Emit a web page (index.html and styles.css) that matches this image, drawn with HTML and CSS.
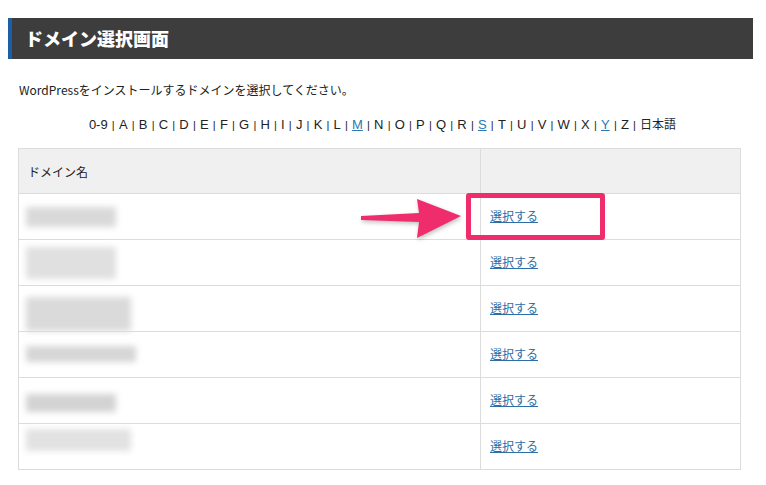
FILE: index.html
```html
<!DOCTYPE html>
<html lang="ja">
<head>
    <meta charset="UTF-8">
    <meta name="viewport" content="width=device-width, initial-scale=1.0">
    <title>ドメイン選択画面</title>
    <link rel="stylesheet" href="styles.css">
</head>
<body>
    <div class="page">
        <h1 class="pageTitle">ドメイン選択画面</h1>
        <div class="content">
            <p class="lead">WordPressをインストールするドメインを選択してください。</p>
            <p class="alphabet">
                <span>0-9</span><i>|</i><span>A</span><i>|</i><span>B</span><i>|</i><span>C</span><i>|</i><span>D</span><i>|</i><span>E</span><i>|</i><span>F</span><i>|</i><span>G</span><i>|</i><span>H</span><i>|</i><span>I</span><i>|</i><span>J</span><i>|</i><span>K</span><i>|</i><span>L</span><i>|</i><a href="#">M</a><i>|</i><span>N</span><i>|</i><span>O</span><i>|</i><span>P</span><i>|</i><span>Q</span><i>|</i><span>R</span><i>|</i><a href="#">S</a><i>|</i><span>T</span><i>|</i><span>U</span><i>|</i><span>V</span><i>|</i><span>W</span><i>|</i><span>X</span><i>|</i><a href="#">Y</a><i>|</i><span>Z</span><i>|</i><span>日本語</span>
            </p>
            <table class="domainTable">
                <tr>
                    <th class="nameCol">ドメイン名</th>
                    <th></th>
                </tr>
                <tr>
                    <td><div class="blur"><span class="b1"></span></div></td>
                    <td class="selectCell">
                        <div class="arrow">
                            <svg width="104" height="44" viewBox="0 0 104 44">
                                <path d="M2 20 L60 17 L58 3 L102 20 L58 42 L60 26 L2 24 Z" fill="#ef2d6c"/>
                            </svg>
                        </div>
                        <div class="highlight"></div>
                        <a href="#">選択する</a>
                    </td>
                </tr>
                <tr>
                    <td><div class="blur"><span class="b2"></span></div></td>
                    <td class="selectCell"><a href="#">選択する</a></td>
                </tr>
                <tr>
                    <td><div class="blur"><span class="b3"></span></div></td>
                    <td class="selectCell"><a href="#">選択する</a></td>
                </tr>
                <tr>
                    <td><div class="blur"><span class="b4"></span></div></td>
                    <td class="selectCell"><a href="#">選択する</a></td>
                </tr>
                <tr>
                    <td><div class="blur"><span class="b5"></span></div></td>
                    <td class="selectCell"><a href="#">選択する</a></td>
                </tr>
                <tr>
                    <td><div class="blur"><span class="b6"></span></div></td>
                    <td class="selectCell"><a href="#">選択する</a></td>
                </tr>
            </table>
        </div>
    </div>
</body>
</html>
```

FILE: styles.css
```css
body{
    margin: 0;
    background: #fff;
    color: #222;
    font-family: "Liberation Sans", "Noto Sans CJK JP", sans-serif;
    font-size: 12px;
}

.page{
    padding: 18px 13px 0 8px;
}

.pageTitle{
    margin: 0;
    height: 41px;
    line-height: 41px;
    background: #3d3d3d;
    border-left: 4px solid #1d5ea6;
    color: #fff;
    font-family: "Noto Sans CJK JP", sans-serif;
    font-size: 18px;
    font-weight: 900;
    padding-left: 13px;
}

.content{
    padding: 0 12px 0 10px;
}

.lead{
    margin: 21px 0 0 1px;
    line-height: 20px;
    font-family: "Noto Sans CJK JP", sans-serif;
}

.alphabet{
    margin: 14px 0 0 0;
    text-align: center;
    line-height: 20px;
    font-size: 13px;
    padding-left: 6px;
}

.alphabet i{
    font-style: normal;
    margin: 0 4.2px;
    font-size: 11px;
}

.alphabet a{
    color: #2a79b5;
}

.alphabet span:last-child{
    font-family: "Noto Sans CJK JP", sans-serif;
    font-size: 12px;
}

.domainTable{
    margin-top: 13px;
    width: 723px;
    border-collapse: collapse;
    border: 1px solid #dcdcdc;
}

.domainTable th{
    background: #f0f0f0;
    height: 44px;
    text-align: left;
    font-weight: normal;
    padding: 0 9px;
    border: 1px solid #dcdcdc;
    font-family: "Noto Sans CJK JP", sans-serif;
}

.domainTable .nameCol{
    width: 443px;
}

.domainTable td{
    height: 45px;
    padding: 0 9px;
    border: 1px solid #dcdcdc;
    vertical-align: middle;
}

.selectCell{
    position: relative;
}

.selectCell a{
    position: relative;
    top: -1px;
    color: #2c6ea5;
    font-family: "Noto Sans CJK JP", sans-serif;
    font-size: 12px;
}

.highlight{
    position: absolute;
    left: -15px;
    top: -1px;
    width: 129px;
    height: 37px;
    border: 5px solid #ef2d6c;
    border-radius: 3px;
}

.arrow{
    position: absolute;
    left: -122px;
    top: 2px;
    filter: drop-shadow(1px 2px 2px rgba(0,0,0,0.25));
}

.arrow svg{
    display: block;
}

.blur{
    position: relative;
    height: 44px;
}

.blur span{
    position: absolute;
    left: -2px;
    background: #d6d6d6;
    filter: blur(3px);
}

.blur .b1{
    top: 12px;
    width: 90px;
    height: 20px;
    background: #d9d9d9;
}

.blur .b2{
    top: 6px;
    width: 90px;
    height: 32px;
    background: #e0e0e0;
}

.blur .b3{
    top: 10px;
    width: 105px;
    height: 34px;
    background: #dadada;
}

.blur .b4{
    top: 13px;
    width: 110px;
    height: 16px;
    background: #d6d6d6;
}

.blur .b5{
    top: 15px;
    width: 90px;
    height: 18px;
    background: #d3d3d3;
}

.blur .b6{
    top: 4px;
    width: 105px;
    height: 22px;
    background: #e2e2e2;
}
```
